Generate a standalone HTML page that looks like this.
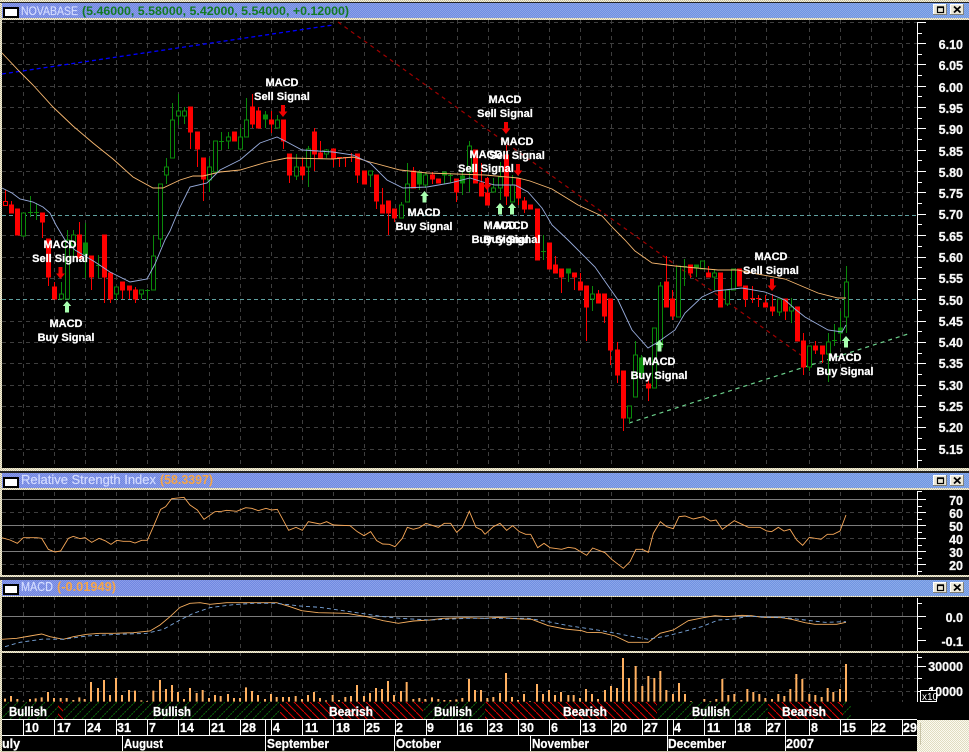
<!DOCTYPE html>
<html><head><meta charset="utf-8"><title>NOVABASE</title>
<style>
html,body{margin:0;padding:0;background:#000;width:969px;height:752px;overflow:hidden}
svg{display:block}
text{font-family:"Liberation Sans",sans-serif}
.b{font-weight:bold;fill:#fff;stroke:#fff;stroke-width:.25;font-size:11px;text-anchor:middle}
.p{font-weight:bold;fill:#f8f8f8;stroke:#f8f8f8;stroke-width:.3;font-size:12.5px;text-anchor:end}
.d{font-weight:bold;fill:#fff;stroke:#fff;stroke-width:.25;font-size:12.5px}
.n{vector-effect:non-scaling-stroke;fill:none;stroke-width:.9}
.ma{fill:none;stroke-width:.9}
</style></head><body>
<svg xmlns="http://www.w3.org/2000/svg" width="969" height="752" viewBox="0 0 969 752">
<defs>
<pattern id="chk" width="2" height="2" patternUnits="userSpaceOnUse"><rect x="0" y="0" width="1" height="1" fill="#fff" fill-opacity=".2"/><rect x="1" y="1" width="1" height="1" fill="#fff" fill-opacity=".2"/></pattern>
<pattern id="tan" width="2" height="2" patternUnits="userSpaceOnUse"><rect width="2" height="2" fill="#f4f0dc"/><rect x="0" y="0" width="1" height="1" fill="#c8c0a0"/><rect x="1" y="1" width="1" height="1" fill="#c8c0a0"/></pattern>
<pattern id="pale" width="2" height="2" patternUnits="userSpaceOnUse"><rect width="2" height="2" fill="#fbfaf0"/><rect x="0" y="0" width="1" height="1" fill="#e0dcc0"/><rect x="1" y="1" width="1" height="1" fill="#e0dcc0"/></pattern>
<linearGradient id="tg" x1="0" x2="1" y1="0" y2="0"><stop offset="0" stop-color="#6f83e2"/><stop offset="1" stop-color="#6f97e2"/></linearGradient>
<pattern id="hg" width="9" height="9" patternUnits="userSpaceOnUse"><path d="M-1 10L10 -1" stroke="#0a6a0a" stroke-width="1" stroke-dasharray="2 1"/></pattern>
<pattern id="hr" width="8" height="8" patternUnits="userSpaceOnUse"><path d="M-1 -1L9 9" stroke="#e00000" stroke-width="1"/></pattern>
<g id="btn">
<rect x="933" y="0" width="14" height="11" fill="#ece8d8"/><path d="M933.5 11V.5H947" stroke="#fff" fill="none"/><path d="M933 10.5H946.5V0" stroke="#808078" fill="none"/>
<rect x="937.5" y="3.5" width="6" height="5" fill="none" stroke="#000" stroke-width="1.2"/><path d="M937 3h7" stroke="#000" stroke-width="1.4"/>
<rect x="950" y="0" width="14" height="11" fill="#ece8d8"/><path d="M950.5 11V.5H964" stroke="#fff" fill="none"/><path d="M950 10.5H963.5V0" stroke="#808078" fill="none"/>
<path d="M954 2.5L960.5 8.5M960.5 2.5L954 8.5" stroke="#000" stroke-width="1.8"/>
</g>
<g id="ico"><rect x="3" y="0" width="16" height="11" fill="#000"/><rect x="5" y="2" width="12" height="7" fill="#fff"/></g>
<path id="up" d="M0 0L4.2 5H2V11.5H-2V5H-4.2Z" fill="#a8ffb0"/>
<path id="dn" d="M-2 0H2V6.5H4.4L0 12L-4.4 6.5H-2Z" fill="#f00000"/>
</defs>

<rect width="969" height="752" fill="#000"/>

<!-- vertical grid -->
<path d="M23.5 20V702M54.5 20V702M85.5 20V702M116.5 20V702M147.5 20V702M178.5 20V702M209.5 20V702M240.5 20V702M271.5 20V702M302.5 20V702M333.5 20V702M364.5 20V702M395.5 20V702M426.5 20V702M457.5 20V702M488.5 20V702M518.5 20V702M549.5 20V702M580.5 20V702M611.5 20V702M642.5 20V702M673.5 20V702M704.5 20V702M735.5 20V702M766.5 20V702M809.5 20V702M840.5 20V702M871.5 20V702M902.5 20V702" stroke="#3e3e3e" stroke-dasharray="4 4" fill="none" shape-rendering="crispEdges"/>
<!-- horizontal grid main -->
<path d="M2 22.5H917M2 43.5H917M2 64.5H917M2 86.5H917M2 107.5H917M2 128.5H917M2 150.5H917M2 171.5H917M2 192.5H917M2 235.5H917M2 257.5H917M2 278.5H917M2 321.5H917M2 342.5H917M2 363.5H917M2 385.5H917M2 406.5H917M2 427.5H917M2 449.5H917" stroke="#3e3e3e" stroke-dasharray="4 4" fill="none" shape-rendering="crispEdges"/>
<path d="M2 215.5H917M2 299.5H917" stroke="#5f9f9f" stroke-dasharray="4 3" fill="none" shape-rendering="crispEdges"/>
<!-- rsi/vol horizontal -->
<path d="M2 512.5H917M2 538.5H917M2 564.5H917M2 666.5H917M2 678.5H917M2 691.5H917" stroke="#3e3e3e" stroke-dasharray="4 4" fill="none" shape-rendering="crispEdges"/>
<path d="M2 499.5H917M2 525.5H917M2 551.5H917M2 616.5H917" stroke="#7c7c7c" fill="none" shape-rendering="crispEdges"/>

<!-- trend lines -->
<path d="M2 74L333 25" stroke="#0000ff" stroke-width="1.3" stroke-dasharray="4 3" fill="none"/>
<path d="M338 22L805 358" stroke="#a00000" stroke-width="1.2" stroke-dasharray="4 4" fill="none"/>
<path d="M629 423L908 334" stroke="#6cd08c" stroke-width="1.2" stroke-dasharray="4 4" fill="none"/>

<!-- candles -->
<g shape-rendering="crispEdges">
<path stroke="#ff0000" fill="#ff0000" d="M11.5 201V213M9.5 205h4v8h-4zM17.5 209V235M15.5 209h4v26h-4zM42.5 213V238M40.5 213h4v9h-4zM48.5 239V286M46.5 239h4v38h-4zM54.5 282V299M52.5 287h4v12h-4zM79.5 222V258M77.5 235h4v23h-4zM91.5 256V290M89.5 256h4v21h-4zM104.5 235V303M102.5 235h4v42h-4zM110.5 273V303M108.5 273h4v26h-4zM122.5 282V299M120.5 282h4v8h-4zM129.5 286V299M127.5 286h4v4h-4zM135.5 287V303M133.5 290h4v9h-4zM190.5 107V149M188.5 107h4v25h-4zM197.5 132V167M195.5 132h4v17h-4zM203.5 158V201M201.5 158h4v21h-4zM234.5 132V141M232.5 132h4v9h-4zM252.5 94V128M250.5 107h4v17h-4zM258.5 107V128M256.5 111h4v17h-4zM271.5 111V133M269.5 120h4v4h-4zM283.5 120V149M281.5 120h4v21h-4zM289.5 154V183M287.5 154h4v21h-4zM302.5 158V180M300.5 167h4v8h-4zM314.5 128V171M312.5 132h4v22h-4zM320.5 141V158M318.5 153h4v5h-4zM333.5 149V167M331.5 149h4v9h-4zM357.5 154V183M355.5 154h4v21h-4zM364.5 171V184M362.5 171h4v13h-4zM376.5 175V209M374.5 175h4v26h-4zM382.5 188V213M380.5 205h4v8h-4zM388.5 201V235M386.5 201h4v12h-4zM394.5 209V222M392.5 209h4v9h-4zM413.5 167V188M411.5 171h4v17h-4zM432.5 172V184M430.5 175h4v4h-4zM438.5 179V183M436.5 179h4v4h-4zM456.5 179V202M454.5 179h4v13h-4zM475.5 150V183M473.5 150h4v33h-4zM481.5 163V196M479.5 183h4v13h-4zM487.5 177V205M485.5 193h4v12h-4zM506.5 145V205M504.5 155h4v41h-4zM518.5 179V205M516.5 179h4v19h-4zM524.5 197V213M522.5 201h4v8h-4zM530.5 205V209M528.5 205h4v4h-4zM537.5 209V260M535.5 209h4v51h-4zM549.5 243V269M547.5 243h4v26h-4zM555.5 256V273M553.5 265h4v8h-4zM561.5 269V293M559.5 269h4v8h-4zM574.5 273V290M572.5 273h4v4h-4zM580.5 273V290M578.5 282h4v8h-4zM586.5 286V341M584.5 286h4v21h-4zM598.5 290V303M596.5 294h4v9h-4zM604.5 294V323M602.5 294h4v22h-4zM610.5 299V365M608.5 299h4v51h-4zM617.5 342V383M615.5 350h4v25h-4zM623.5 371V431M621.5 371h4v47h-4zM648.5 377V401M646.5 384h4v4h-4zM666.5 256V307M664.5 282h4v25h-4zM672.5 290V320M670.5 299h4v17h-4zM690.5 265V278M688.5 265h4v8h-4zM708.5 266V277M706.5 273h4v4h-4zM720.5 273V307M718.5 273h4v34h-4zM739.5 269V286M737.5 269h4v17h-4zM745.5 286V307M743.5 286h4v13h-4zM765.5 295V307M763.5 303h4v4h-4zM772.5 294V316M770.5 307h4v4h-4zM785.5 299V320M783.5 299h4v12h-4zM797.5 307V341M795.5 307h4v34h-4zM803.5 333V375M801.5 341h4v26h-4zM815.5 341V354M813.5 346h4v4h-4zM822.5 346V363M820.5 346h4v8h-4z"/>
<path stroke="#ff0000" fill="none" d="M339.5 158V167M337 157.5h5M345.5 158V167M343 157.5h5M351.5 153V162M349 157.5h5M752.5 286V303M750 298.5h5M758.5 295V307M756 298.5h5M5.5 190V201"/>
<rect x="3.5" y="201.5" width="4" height="4" fill="#000" stroke="#ff0000"/>

<path stroke="#0a8a0a" fill="#0a8a0a" d="M85.5 223V278M83.5 243h4v12h-4zM265.5 111V128M263.5 115h4v4h-4zM419.5 170V190M417.5 173h4v11h-4zM444.5 172V184M442.5 172h4v3h-4zM462.5 170V195M460.5 176h4v7h-4zM568.5 269V282M566.5 269h4v4h-4zM641.5 355V378M639.5 358h4v15h-4zM696.5 265V277M694.5 265h4v3h-4zM840.5 311V341M838.5 328h4v5h-4z"/>
<path stroke="#0a8a0a" fill="none" d="M30.5 196V217M28 212.5h5M36.5 203V220M34 212.5h5M98.5 255V278M96 265.5h5M147.5 289V300M145 290.5h5M221.5 132V150M219 141.5h5M450.5 173V183M448 175.5h5M543.5 235V260M541 251.5h5M684.5 259V286M682 266.5h5M834.5 324V346M832 340.5h5"/>
<path stroke="#0a8a0a" fill="#000" d="M21.5 213h4v23h-4zM61.5 282V294M59.5 294h4v5h-4zM67.5 230V240M65.5 240h4v59h-4zM73.5 230V235M73.5 245V262M71.5 235h4v10h-4zM116.5 294V300M114.5 287h4v7h-4zM141.5 294V299M139.5 290h4v4h-4zM153.5 235V256M151.5 256h4v34h-4zM160.5 239V247M158.5 184h4v55h-4zM166.5 158V167M166.5 175V184M164.5 167h4v8h-4zM172.5 103V120M170.5 120h4v38h-4zM178.5 94V111M178.5 116V125M176.5 111h4v5h-4zM184.5 107V111M184.5 116V124M182.5 111h4v5h-4zM209.5 158V167M209.5 180V192M207.5 167h4v13h-4zM213.5 141h4v31h-4zM228.5 132V137M228.5 141V149M226.5 137h4v4h-4zM240.5 128V137M238.5 137h4v12h-4zM246.5 98V120M244.5 120h4v17h-4zM277.5 115V120M275.5 120h4v8h-4zM296.5 154V167M296.5 176V180M294.5 167h4v9h-4zM308.5 146V149M308.5 167V187M306.5 149h4v18h-4zM326.5 149V150M326.5 154V158M324.5 150h4v4h-4zM370.5 175V187M368.5 171h4v4h-4zM401.5 202V205M399.5 205h4v13h-4zM407.5 163V184M405.5 184h4v18h-4zM425.5 172V175M425.5 185V188M423.5 175h4v10h-4zM469.5 141V146M469.5 172V192M467.5 146h4v26h-4zM493.5 178V188M491.5 188h4v4h-4zM500.5 162V177M500.5 188V200M498.5 177h4v11h-4zM512.5 175V185M510.5 185h4v17h-4zM592.5 286V294M592.5 299V311M590.5 294h4v5h-4zM629.5 418V423M627.5 406h4v12h-4zM635.5 341V355M633.5 355h4v42h-4zM652.5 328h4v60h-4zM660.5 282V286M658.5 286h4v61h-4zM676.5 266h4v51h-4zM700.5 261h4v8h-4zM714.5 269V273M714.5 277V290M712.5 273h4v4h-4zM727.5 304V306M725.5 290h4v14h-4zM731.5 269h4v21h-4zM779.5 312V316M777.5 299h4v13h-4zM791.5 298V307M791.5 311V323M789.5 307h4v4h-4zM809.5 367V371M807.5 346h4v21h-4zM828.5 333V342M828.5 354V382M826.5 342h4v12h-4zM846.5 266V282M846.5 317V333M844.5 282h4v35h-4z"/>
</g>

<!-- moving averages -->
<polyline class="ma" stroke="#f8b870" points="2,53 20,72 33,85 53,107 73,126 93,143 113,159 133,177 153,188 163,188 180,180 193,176 203,176 220,172 240,170 267,162 287,158 333,159 353,157 370,162 400,170 427,173 485,175 518,178 530,181 552,189 578,205 602,216 613,228 625,240 635,251 652,263 675,266 718,270 738,270 752,273 785,279 818,293 838,298 846,298"/>
<polyline class="ma" stroke="#98acdc" points="2,188 12,193 20,199 33,202 43,207 50,213 56,225 65,240 75,250 95,262 110,272 130,282 147,279 155,264 165,240 170,231 180,207 190,187 207,183 220,170 240,160 260,143 277,137 287,142 302,150 333,152 353,155 370,163 387,180 403,188 427,187 450,183 470,178 483,182 495,185 515,185 528,192 542,208 552,225 568,240 595,267 618,300 632,330 648,348 658,342 675,330 685,313 702,297 715,291 742,288 765,292 785,300 795,309 805,317 828,330 842,332 846,325"/>

<!-- arrows -->
<use href="#dn" x="283" y="105"/><use href="#dn" x="60.5" y="267"/><use href="#dn" x="506" y="122"/><use href="#dn" x="518" y="164"/><use href="#dn" x="487" y="178"/><use href="#dn" x="772" y="279"/>
<use href="#up" x="67" y="301"/><use href="#up" x="424.5" y="191"/><use href="#up" x="500" y="203"/><use href="#up" x="512" y="203"/><use href="#up" x="659.5" y="340"/><use href="#up" x="846" y="336"/>

<!-- annotations -->
<text class="b" x="282" y="86">MACD</text><text class="b" x="282" y="100">Sell Signal</text>
<text class="b" x="60" y="248">MACD</text><text class="b" x="60" y="262">Sell Signal</text>
<text class="b" x="66" y="327">MACD</text><text class="b" x="66" y="341">Buy Signal</text>
<text class="b" x="424" y="216">MACD</text><text class="b" x="424" y="230">Buy Signal</text>
<text class="b" x="505" y="103">MACD</text><text class="b" x="505" y="117">Sell Signal</text>
<text class="b" x="517" y="145">MACD</text><text class="b" x="517" y="159">Sell Signal</text>
<text class="b" x="486" y="158">MACD</text><text class="b" x="486" y="172">Sell Signal</text>
<text class="b" x="500" y="229">MACD</text><text class="b" x="500" y="243">Buy Signal</text>
<text class="b" x="512" y="229">MACD</text><text class="b" x="512" y="243">Buy Signal</text>
<text class="b" x="659" y="365">MACD</text><text class="b" x="659" y="379">Buy Signal</text>
<text class="b" x="771" y="260">MACD</text><text class="b" x="771" y="274">Sell Signal</text>
<text class="b" x="845" y="361">MACD</text><text class="b" x="845" y="375">Buy Signal</text>

<!-- RSI line -->
<g transform="translate(0,470) scale(.33333)"><polyline class="n" stroke="#f8a858" points="5,203 30,210 52,220 70,203 110,203 125,205 145,238 165,246 182,243 205,205 220,199 240,206 255,203 275,217 297,205 315,212 333,223 350,211 370,214 390,214 405,219 425,211 442,211 460,170 482,118 497,110 515,86 552,82 570,105 592,120 612,148 645,125 665,124 680,121 710,124 737,113 755,115 775,122 798,115 815,120 832,118 866,181 888,172 907,181 925,155 960,162 980,155 1000,165 1050,167 1072,185 1092,197 1112,185 1130,212 1148,222 1168,223 1185,230 1207,205 1222,172 1240,178 1258,173 1278,160 1315,172 1333,160 1352,160 1370,187 1387,172 1408,124 1428,172 1445,180 1455,193"/>
<polyline class="n" stroke="#f8b060" points="5,508 50,505 90,498 125,492 150,500 190,508 220,500 260,493 300,490 340,490 400,488 450,483 480,465 510,440 540,412 570,400 600,398 630,403 680,398 830,398 870,410 905,422 955,428 1040,430 1100,440 1150,452 1195,460 1240,453 1290,450 1330,445 1400,443 1455,445"/>
<polyline class="n" stroke="#7aa6dc" stroke-dasharray="4 3" points="15,530 60,517 130,507 190,508 260,498 350,493 440,490 490,478 540,450 580,430 630,413 700,404 760,400 830,400 900,408 960,412 1070,428 1150,440 1200,445 1290,450 1400,445 1455,445"/>
<path stroke="#ffb060" stroke-width="6" fill="none" d="M15 695V686M33 695V678M52 695V687M70 695V694M90 695V687M107 695V685M125 695V682M144 695V666M162 695V684M182 695V684M200 695V684M220 695V690M238 695V682M254 695V687M273 695V636M294 695V654M312 695V630M330 695V675M348 695V624M366 695V675M387 695V660M405 695V662M424 695V691M441 695V693M460 695V662M480 695V630M498 695V657M516 695V645M534 695V666M552 695V687M570 695V654M590 695V669M608 695V660M627 695V684M645 695V675M662 695V678M684 695V672M702 695V684M720 695V684M738 695V652M756 695V663M774 695V675M795 695V687M813 695V672M830 695V681M849 695V681M867 695V681M887 695V678M906 695V687M924 695V675M942 695V666M960 695V684M978 695V691M998 695V675M1017 695V690M1036 695V681M1053 695V678M1071 695V645M1092 695V678M1110 695V669M1128 695V654M1146 695V657M1164 695V633M1182 695V675M1203 695V663M1220 695V636M1240 695V687M1258 695V684M1276 695V687M1296 695V682M1315 695V687M1333 695V690M1351 695V690M1369 695V688M1387 695V684M1407 695V627M1425 695V660M1443 695V660"/>
</g>
<g transform="translate(485,470) scale(.33333)"><polyline class="n" stroke="#f8a858" points="0,193 25,170 45,160 65,181 83,167 103,185 122,193 137,193 158,233 177,220 195,233 230,238 250,232 270,235 305,256 323,234 360,248 380,268 415,295 435,275 453,238 472,238 490,247 505,190 526,155 545,170 565,176 582,140 600,138 625,147 655,140 677,153 693,150 712,178 748,152 790,172 825,172 845,183 860,185 880,172 897,183 915,178 935,210 953,226 973,202 1008,208 1027,193 1045,193 1065,183 1083,135"/>
<polyline class="n" stroke="#f8b060" points="0,445 40,442 110,447 140,448 190,467 240,477 290,482 305,487 350,488 390,498 430,517 490,517 525,490 565,480 610,452 655,443 690,437 725,440 770,436 800,437 830,442 890,443 920,448 960,458 990,463 1055,463 1083,457"/>
<polyline class="n" stroke="#7aa6dc" stroke-dasharray="4 3" points="0,445 130,445 200,457 250,467 350,482 430,497 490,508 550,497 650,470 700,450 750,447 790,438 830,441 900,443 960,450 1020,457 1083,455"/>
<path stroke="#ffb060" stroke-width="6" fill="none" d="M7 695V684M25 695V681M45 695V669M63 695V609M81 695V681M99 695V690M117 695V672M135 695V693M156 695V642M174 695V672M192 695V660M210 695V675M228 695V666M250 695V675M266 695V675M285 695V684M303 695V657M321 695V672M339 695V687M360 695V660M378 695V648M396 695V654M414 695V564M432 695V624M452 695V588M472 695V648M490 695V618M508 695V624M526 695V603M544 695V660M564 695V672M582 695V639M600 695V672M618 695V693M658 695V687M676 695V693M694 695V687M712 695V627M730 695V675M748 695V672M769 695V690M787 695V657M805 695V666M823 695V672M841 695V684M861 695V687M880 695V672M898 695V678M916 695V657M934 695V612M952 695V627M973 695V672M991 695V675M1010 695V681M1028 695V654M1045 695V666M1065 695V657M1083 695V582"/>
</g>

<!-- hatch band -->
<rect x="2" y="702" width="915" height="17" fill="#000"/>
<rect x="2" y="702" width="56" height="17" fill="url(#hg)"/>
<rect x="58" y="702" width="5" height="17" fill="url(#hr)"/>
<rect x="63" y="702" width="217" height="17" fill="url(#hg)"/>
<rect x="280" y="702" width="143" height="17" fill="url(#hr)"/>
<rect x="423" y="702" width="62" height="17" fill="url(#hg)"/>
<rect x="485" y="702" width="172" height="17" fill="url(#hr)"/>
<rect x="657" y="702" width="111" height="17" fill="url(#hg)"/>
<rect x="768" y="702" width="75" height="17" fill="url(#hr)"/>
<rect x="843" y="702" width="8" height="17" fill="url(#hg)"/>
<text class="d" x="9" y="716" textLength="38" lengthAdjust="spacingAndGlyphs">Bullish</text>
<text class="d" x="153" y="716" textLength="38" lengthAdjust="spacingAndGlyphs">Bullish</text>
<text class="d" x="329" y="716" textLength="44" lengthAdjust="spacingAndGlyphs">Bearish</text>
<text class="d" x="434" y="716" textLength="38" lengthAdjust="spacingAndGlyphs">Bullish</text>
<text class="d" x="563" y="716" textLength="44" lengthAdjust="spacingAndGlyphs">Bearish</text>
<text class="d" x="692" y="716" textLength="38" lengthAdjust="spacingAndGlyphs">Bullish</text>
<text class="d" x="782" y="716" textLength="44" lengthAdjust="spacingAndGlyphs">Bearish</text>

<!-- date rows -->
<path shape-rendering="crispEdges" stroke="#fff" fill="none" d="M2 719.5H917M2 735.5H917M23.5 720V735M54.5 720V735M85.5 720V735M116.5 720V735M147.5 720V735M178.5 720V735M209.5 720V735M240.5 720V735M265.5 720V751M271.5 720V735M302.5 720V735M333.5 720V735M364.5 720V735M395.5 720V735M426.5 720V735M457.5 720V735M487.5 720V735M518.5 720V735M549.5 720V735M580.5 720V735M611.5 720V735M642.5 720V735M667.5 720V751M673.5 720V735M704.5 720V735M735.5 720V735M766.5 720V735M785.5 720V751M809.5 720V735M840.5 720V735M871.5 720V735M902.5 720V735M122.5 736V751M394.5 736V751M530.5 736V751"/>
<g>
<text class="d" x="25" y="732">10</text><text class="d" x="57" y="732">17</text><text class="d" x="87" y="732">24</text><text class="d" x="117" y="732">31</text><text class="d" x="149" y="732">7</text><text class="d" x="180" y="732">14</text><text class="d" x="211" y="732">21</text><text class="d" x="242" y="732">28</text><text class="d" x="273" y="732">4</text><text class="d" x="305" y="732">11</text><text class="d" x="336" y="732">18</text><text class="d" x="366" y="732">25</text><text class="d" x="396" y="732">2</text><text class="d" x="427" y="732">9</text><text class="d" x="459" y="732">16</text><text class="d" x="489" y="732">23</text><text class="d" x="520" y="732">30</text><text class="d" x="551" y="732">6</text><text class="d" x="582" y="732">13</text><text class="d" x="613" y="732">20</text><text class="d" x="644" y="732">27</text><text class="d" x="674" y="732">4</text><text class="d" x="707" y="732">11</text><text class="d" x="737" y="732">18</text><text class="d" x="767" y="732">27</text><text class="d" x="811" y="732">8</text><text class="d" x="842" y="732">15</text><text class="d" x="872" y="732">22</text><text class="d" x="903" y="732">29</text>
</g>
<text class="d" x="2" y="748">uly</text>
<text class="d" x="124" y="748" textLength="39" lengthAdjust="spacingAndGlyphs">August</text>
<text class="d" x="267" y="748" textLength="62" lengthAdjust="spacingAndGlyphs">September</text>
<text class="d" x="396" y="748" textLength="45" lengthAdjust="spacingAndGlyphs">October</text>
<text class="d" x="532" y="748" textLength="57" lengthAdjust="spacingAndGlyphs">November</text>
<text class="d" x="668" y="748" textLength="58" lengthAdjust="spacingAndGlyphs">December</text>
<text class="d" x="786" y="748" textLength="28" lengthAdjust="spacingAndGlyphs">2007</text>
<rect x="917" y="720" width="52" height="32" fill="url(#pale)"/>
<path d="M920.5 723V745" stroke="#c8c4a8" fill="none"/>
<rect x="0" y="751" width="917" height="1" fill="#c8c4a8"/>

<!-- axes -->
<rect x="917" y="20" width="52" height="682" fill="#000"/>
<path shape-rendering="crispEdges" stroke="#fff" fill="none" d="M917.5 22V468M917 22.5h9M917 33.5h5M917 43.5h9M917 54.5h5M917 64.5h9M917 75.5h5M917 86.5h9M917 96.5h5M917 107.5h9M917 118.5h5M917 128.5h9M917 139.5h5M917 150.5h9M917 160.5h5M917 171.5h9M917 182.5h5M917 192.5h9M917 203.5h5M917 214.5h9M917 224.5h5M917 235.5h9M917 246.5h5M917 257.5h9M917 267.5h5M917 278.5h9M917 289.5h5M917 299.5h9M917 310.5h5M917 321.5h9M917 331.5h5M917 342.5h9M917 353.5h5M917 363.5h9M917 374.5h5M917 385.5h9M917 395.5h5M917 406.5h9M917 417.5h5M917 427.5h9M917 438.5h5M917 449.5h9M917 460.5h5
M917.5 491V575M917 491.5h5M917 499.5h9M917 506.5h5M917 512.5h9M917 519.5h5M917 525.5h9M917 532.5h5M917 538.5h9M917 545.5h5M917 551.5h9M917 558.5h5M917 564.5h9M917 571.5h5
M917.5 598V651M917 603.5h5M917 616.5h9M917 628.5h5M917 640.5h9
M917.5 654V702M917 657.5h5M917 666.5h9M917 678.5h5M917 691.5h9"/>
<text class="p" x="963" y="49">6.10</text><text class="p" x="963" y="70">6.05</text><text class="p" x="963" y="92">6.00</text><text class="p" x="963" y="113">5.95</text><text class="p" x="963" y="134">5.90</text><text class="p" x="963" y="156">5.85</text><text class="p" x="963" y="177">5.80</text><text class="p" x="963" y="198">5.75</text><text class="p" x="963" y="219">5.70</text><text class="p" x="963" y="241">5.65</text><text class="p" x="963" y="262">5.60</text><text class="p" x="963" y="283">5.55</text><text class="p" x="963" y="305">5.50</text><text class="p" x="963" y="326">5.45</text><text class="p" x="963" y="347">5.40</text><text class="p" x="963" y="368">5.35</text><text class="p" x="963" y="390">5.30</text><text class="p" x="963" y="411">5.25</text><text class="p" x="963" y="432">5.20</text><text class="p" x="963" y="454">5.15</text>
<text class="p" x="963" y="505">70</text><text class="p" x="963" y="518">60</text><text class="p" x="963" y="531">50</text><text class="p" x="963" y="544">40</text><text class="p" x="963" y="557">30</text><text class="p" x="963" y="570">20</text>
<text class="p" x="963" y="622">0.0</text><text class="p" x="963" y="646">-0.1</text>
<text class="p" x="963" y="671">30000</text><text class="p" x="963" y="696">10000</text>
<rect x="920.5" y="690.5" width="16" height="11" fill="#000" stroke="#fff"/>
<text x="922" y="700" fill="#fff" font-size="10">x10</text>

<!-- frames -->
<rect x="0" y="0" width="969" height="2" fill="url(#tan)"/>
<rect x="0" y="0" width="2" height="752" fill="url(#tan)"/>
<rect x="0" y="2" width="969" height="1" fill="#222"/>
<rect x="2" y="3" width="967" height="15" fill="url(#tg)"/><rect x="2" y="3" width="967" height="15" fill="url(#chk)"/>
<rect x="2" y="18" width="967" height="2" fill="url(#tan)"/>
<rect x="0" y="468" width="969" height="3" fill="url(#tan)"/><rect x="0" y="471" width="969" height="2" fill="#222"/>
<rect x="2" y="473" width="967" height="15" fill="url(#tg)"/><rect x="2" y="473" width="967" height="15" fill="url(#chk)"/>
<rect x="2" y="488" width="967" height="2" fill="url(#tan)"/>
<rect x="0" y="575" width="969" height="2" fill="url(#tan)"/><rect x="0" y="577" width="969" height="3" fill="#222"/>
<rect x="2" y="580" width="967" height="16" fill="url(#tg)"/><rect x="2" y="580" width="967" height="16" fill="url(#chk)"/>
<rect x="2" y="596" width="967" height="1" fill="url(#tan)"/>
<rect x="0" y="651" width="969" height="2" fill="url(#tan)"/>

<use href="#ico" y="7"/><use href="#ico" y="477"/><use href="#ico" y="584"/>
<use href="#btn" y="4"/><use href="#btn" y="475"/><use href="#btn" y="582"/>

<text x="21" y="15" font-size="12" fill="#d4dcff" stroke="#d4dcff" stroke-width=".2" textLength="57" lengthAdjust="spacingAndGlyphs">NOVABASE</text>
<text x="82" y="15" font-size="12" font-weight="bold" fill="#127a22" textLength="267" lengthAdjust="spacingAndGlyphs">(5.46000, 5.58000, 5.42000, 5.54000, +0.12000)</text>
<text x="21" y="484" font-size="13" fill="#d4dcff" stroke="#d4dcff" stroke-width=".2" textLength="135" lengthAdjust="spacingAndGlyphs">Relative Strength Index</text>
<text x="160" y="484" font-size="13" font-weight="bold" fill="#f5a548" textLength="53" lengthAdjust="spacingAndGlyphs">(58.3397)</text>
<text x="21" y="591" font-size="13" fill="#d4dcff" stroke="#d4dcff" stroke-width=".2" textLength="32" lengthAdjust="spacingAndGlyphs">MACD</text>
<text x="57" y="591" font-size="13" font-weight="bold" fill="#f5a548" textLength="59" lengthAdjust="spacingAndGlyphs">(-0.01949)</text>
</svg>
</body></html>
